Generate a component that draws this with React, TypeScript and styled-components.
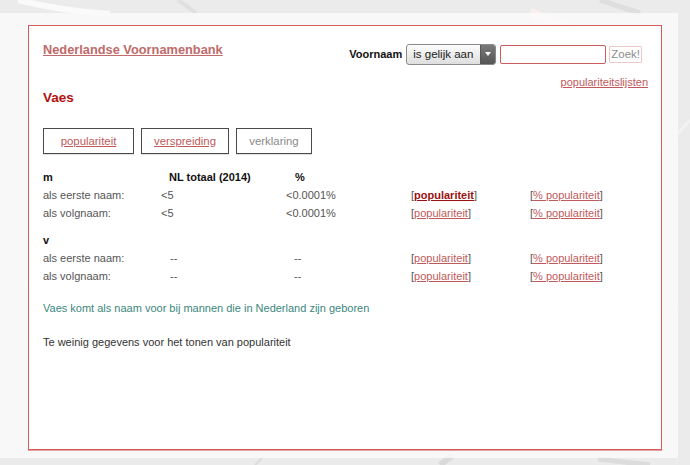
import React from 'react';
import styled, { createGlobalStyle } from 'styled-components';

const GlobalStyle = createGlobalStyle`
  html, body {
    margin: 0;
    padding: 0;
    background: #ebebeb;
  }
  body {
    font-family: "Liberation Sans", Arial, Helvetica, sans-serif;
    font-size: 11px;
    color: #444;
  }
`;

const Backdrop = styled.div`
  position: relative;
  width: 690px;
  height: 465px;
  overflow: hidden;
  background: #ebebeb;
`;

const Decor = styled.svg`
  position: absolute;
  inset: 0;
  width: 690px;
  height: 465px;
  pointer-events: none;
`;

const Sheet = styled.div`
  position: relative;
  box-sizing: border-box;
  width: 678px;
  height: 445px;
  margin-top: 13px;
  padding: 12px 0 0 28px;
  background: rgba(250, 250, 250, 0.82);
`;

const Card = styled.main`
  box-sizing: border-box;
  width: 634px;
  height: 425px;
  padding: 16px 13px 0 14px;
  background: #fff;
  border: 1px solid #d65a5a;
  box-shadow: 0 1px 0 rgba(214, 90, 90, 0.55);
`;

const TopBar = styled.header`
  display: flex;
  justify-content: space-between;
  align-items: flex-start;
`;

const SiteTitle = styled.a`
  font-size: 12.8px;
  line-height: 16px;
  font-weight: bold;
  color: #c06a6a;
  text-decoration: underline;
`;

const RightColumn = styled.div`
  display: flex;
  flex-direction: column;
  align-items: flex-end;
`;

const SearchForm = styled.form`
  display: flex;
  align-items: center;
  gap: 4px;
  margin: 2px 6px 0 0;
  height: 20px;
`;

const FieldLabel = styled.label`
  font-weight: bold;
  font-size: 11px;
  color: #111;
`;

const SelectBox = styled.div`
  display: flex;
  box-sizing: border-box;
  width: 90px;
  height: 21px;
  border: 1px solid #8a8a8a;
  border-radius: 3px;
  overflow: hidden;
  background: linear-gradient(#fcfcfc, #dedede);
`;

const Select = styled.select`
  appearance: none;
  flex: 1;
  min-width: 0;
  border: none;
  background: transparent;
  padding: 0 0 0 6px;
  font-family: inherit;
  font-size: 11.5px;
  color: #222;
  outline: none;
`;

const SelectArrow = styled.span`
  width: 14px;
  display: flex;
  align-items: center;
  justify-content: center;
  background: linear-gradient(#7a7a7a, #555);
  border-left: 1px solid #555;

  &::after {
    content: '';
    border-left: 3px solid transparent;
    border-right: 3px solid transparent;
    border-top: 4px solid #fff;
  }
`;

const TextInput = styled.input`
  box-sizing: border-box;
  width: 106px;
  height: 19px;
  border: 1px solid #cc5c5c;
  border-radius: 2px;
  padding: 0 4px;
  font-family: inherit;
  font-size: 11px;
  outline: none;
`;

const SearchButton = styled.button`
  box-sizing: border-box;
  height: 17px;
  padding: 0 1px;
  margin-left: -1px;
  border: 1px solid #ecc9c9;
  border-radius: 1px;
  background: #fff;
  color: #8c8c8c;
  font-family: inherit;
  font-size: 11.5px;
  line-height: 15px;
`;

const ListLink = styled.a`
  margin-top: 11px;
  font-size: 11px;
  line-height: 14px;
  color: #c05a5a;
  text-decoration: underline;
`;

const NameHeading = styled.h1`
  margin: 1px 0 0;
  font-size: 13.5px;
  line-height: 16px;
  font-weight: bold;
  color: #b30f0f;
`;

const Tabs = styled.nav`
  display: flex;
  gap: 7px;
  margin-top: 22px;
`;

const Tab = styled.a<{ $muted?: boolean; $width: number }>`
  box-sizing: border-box;
  width: ${({ $width }) => $width}px;
  height: 26px;
  display: flex;
  align-items: center;
  justify-content: center;
  border: 1px solid #4a4a4a;
  box-shadow: 0 1px 0 rgba(0, 0, 0, 0.12);
  font-size: 11.4px;
  color: ${({ $muted }) => ($muted ? '#8a8a8a' : '#c05a5a')};
  text-decoration: ${({ $muted }) => ($muted ? 'none' : 'underline')};
`;

const StatsGrid = styled.div`
  display: grid;
  grid-template-columns: 118px 125px 125px 119px auto;
  align-items: center;
  margin-top: 14px;
`;

const Cell = styled.div<{ $bold?: boolean; $indent?: number }>`
  font-size: 11px;
  line-height: 18px;
  white-space: nowrap;
  font-weight: ${({ $bold }) => ($bold ? 'bold' : 'normal')};
  color: ${({ $bold }) => ($bold ? '#111' : '#555')};
  padding-left: ${({ $indent }) => $indent ?? 0}px;
`;

const Spacer = styled.div`
  grid-column: 1 / -1;
  height: 9px;
`;

const Bracket = styled.span`
  color: #555;
`;

const RowLink = styled.a<{ $active?: boolean }>`
  color: ${({ $active }) => ($active ? '#9c1010' : '#c05a5a')};
  font-weight: ${({ $active }) => ($active ? 'bold' : 'normal')};
  text-decoration: underline;
`;

const Notice = styled.p<{ $tone: 'teal' | 'dark' }>`
  margin: 0;
  font-size: 11px;
  line-height: 16px;
  color: ${({ $tone }) => ($tone === 'teal' ? '#3a877d' : '#333')};
`;

const FirstNotice = styled(Notice)`
  margin-top: 15px;
`;

const SecondNotice = styled(Notice)`
  margin-top: 18px;
`;

type Row = { label: string; count: string; share: string; active?: boolean };

const sections: { gender: string; rows: Row[] }[] = [
  {
    gender: 'm',
    rows: [
      { label: 'als eerste naam:', count: '<5', share: '<0.0001%', active: true },
      { label: 'als volgnaam:', count: '<5', share: '<0.0001%' },
    ],
  },
  {
    gender: 'v',
    rows: [
      { label: 'als eerste naam:', count: '--', share: '--' },
      { label: 'als volgnaam:', count: '--', share: '--' },
    ],
  },
];

const Links: React.FC<{ active?: boolean }> = ({ active }) => (
  <>
    <Cell>
      <Bracket>[</Bracket>
      <RowLink href="#" $active={active}>populariteit</RowLink>
      <Bracket>]</Bracket>
    </Cell>
    <Cell>
      <Bracket>[</Bracket>
      <RowLink href="#">% populariteit</RowLink>
      <Bracket>]</Bracket>
    </Cell>
  </>
);

const App: React.FC = () => (
  <>
    <GlobalStyle />
    <Backdrop>
      <Decor viewBox="0 0 690 465">
        <path d="M18 0 C50 8 80 12 110 14" stroke="#fafafa" strokeWidth="6" fill="none" />
        <path d="M178 0 L196 13" stroke="#e0e0e0" strokeWidth="4" fill="none" />
        <path d="M530 13 L600 40" stroke="#fbf0f0" strokeWidth="10" fill="none" />
        <path d="M600 0 L640 13" stroke="#dedede" strokeWidth="5" fill="none" />
        <path d="M0 300 L28 280" stroke="#f0f0f0" strokeWidth="3" fill="none" />
        <path d="M0 420 L28 405" stroke="#f3e6e6" strokeWidth="1" fill="none" />
        <path d="M662 150 L690 120" stroke="#f2f2f2" strokeWidth="3" fill="none" />
        <path d="M662 320 L690 300" stroke="#f6eaea" strokeWidth="1" fill="none" />
        <path d="M255 465 L262 458" stroke="#dcdcdc" strokeWidth="2" fill="none" />
        <path d="M440 465 L452 456" stroke="#dadada" strokeWidth="6" fill="none" />
        <path d="M598 459 L650 465" stroke="#dcdcdc" strokeWidth="5" fill="none" />
      </Decor>
      <Sheet>
        <Card>
          <TopBar>
            <SiteTitle href="#">Nederlandse Voornamenbank</SiteTitle>
            <RightColumn>
              <SearchForm onSubmit={(e) => e.preventDefault()}>
                <FieldLabel htmlFor="naam">Voornaam</FieldLabel>
                <SelectBox>
                  <Select defaultValue="eq">
                    <option value="eq">is gelijk aan</option>
                    <option value="start">begint met</option>
                  </Select>
                  <SelectArrow />
                </SelectBox>
                <TextInput id="naam" type="text" />
                <SearchButton type="submit">Zoek!</SearchButton>
              </SearchForm>
              <ListLink href="#">populariteitslijsten</ListLink>
            </RightColumn>
          </TopBar>

          <NameHeading>Vaes</NameHeading>

          <Tabs>
            <Tab href="#" $width={91}>populariteit</Tab>
            <Tab href="#" $width={88}>verspreiding</Tab>
            <Tab $muted $width={76}>verklaring</Tab>
          </Tabs>

          <StatsGrid>
            {sections.map((section, si) => (
              <React.Fragment key={section.gender}>
                {si > 0 && <Spacer />}
                <Cell $bold>{section.gender}</Cell>
                {si === 0 ? (
                  <>
                    <Cell $bold $indent={8}>NL totaal (2014)</Cell>
                    <Cell $bold $indent={9}>%</Cell>
                  </>
                ) : (
                  <>
                    <Cell />
                    <Cell />
                  </>
                )}
                <Cell />
                <Cell />
                {section.rows.map((row) => {
                  const empty = row.count === '--';
                  return (
                    <React.Fragment key={section.gender + row.label}>
                      <Cell>{row.label}</Cell>
                      <Cell $indent={empty ? 9 : 0}>{row.count}</Cell>
                      <Cell $indent={empty ? 8 : 0}>{row.share}</Cell>
                      <Links active={row.active} />
                    </React.Fragment>
                  );
                })}
              </React.Fragment>
            ))}
          </StatsGrid>

          <FirstNotice $tone="teal">
            Vaes komt als naam voor bij mannen die in Nederland zijn geboren
          </FirstNotice>
          <SecondNotice $tone="dark">Te weinig gegevens voor het tonen van populariteit</SecondNotice>
        </Card>
      </Sheet>
    </Backdrop>
  </>
);

export default App;
